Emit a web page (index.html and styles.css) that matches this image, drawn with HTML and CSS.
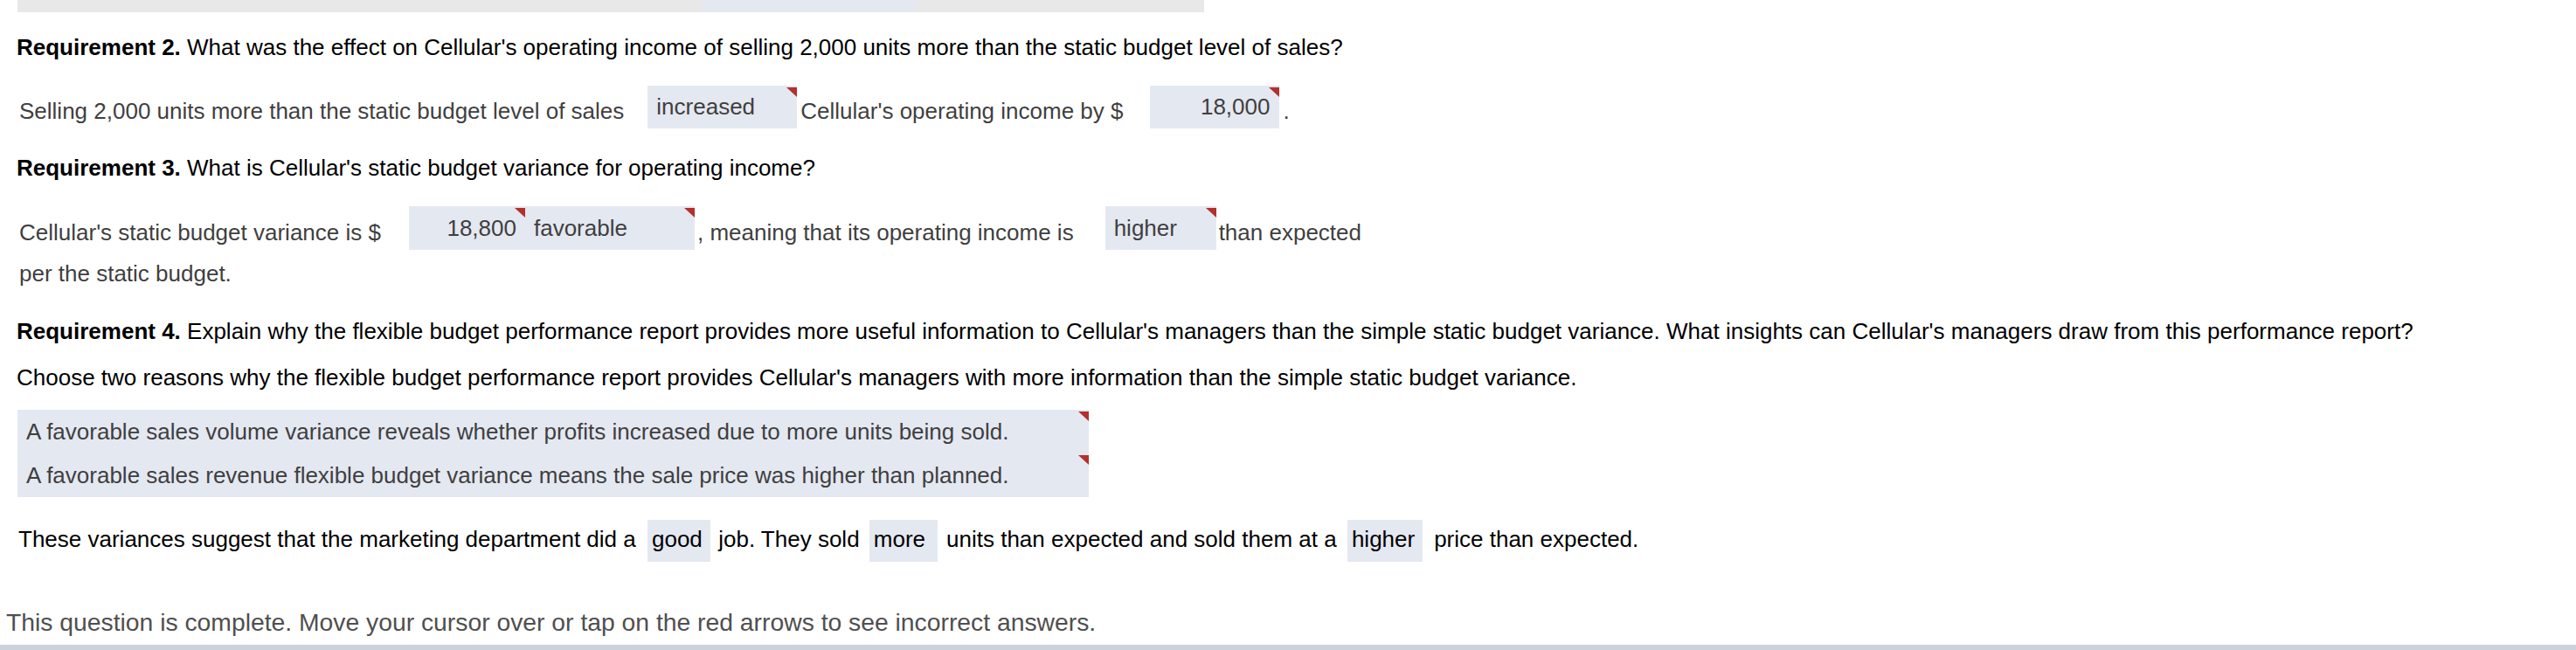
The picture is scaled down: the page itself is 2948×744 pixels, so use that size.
FILE: index.html
```html
<!DOCTYPE html>
<html>
<head>
<meta charset="utf-8">
<link rel="stylesheet" href="styles.css">
</head>
<body>
<div class="page">
  <div class="topbar"><div class="topbar-fill"></div></div>

  <p class="req req-2"><b>Requirement 2.</b> What was the effect on Cellular's operating income of selling 2,000 units more than the static budget level of sales?</p>

  <p class="answer answer-1">Selling 2,000 units more than the static budget level of sales<span class="field f-increased">increased<i class="flag"></i></span>Cellular's operating income by $<span class="field num f-18000">18,000<i class="flag"></i></span>.</p>

  <p class="req req-3"><b>Requirement 3.</b> What is Cellular's static budget variance for operating income?</p>

  <p class="answer answer-2">Cellular's static budget variance is $<span class="field num tall f-18800">18,800<i class="flag"></i></span><span class="field tall f-favorable">favorable<i class="flag"></i></span>, meaning that its operating income is<span class="field tall f-higher">higher<i class="flag"></i></span>than expected<br>per the static budget.</p>

  <p class="req req-4"><b>Requirement 4.</b> Explain why the flexible budget performance report provides more useful information to Cellular's managers than the simple static budget variance. What insights can Cellular's managers draw from this performance report?</p>

  <p class="choose">Choose two reasons why the flexible budget performance report provides Cellular's managers with more information than the simple static budget variance.</p>

  <div class="choices">
    <div class="choice">A favorable sales volume variance reveals whether profits increased due to more units being sold.<i class="flag"></i></div>
    <div class="choice">A favorable sales revenue flexible budget variance means the sale price was higher than planned.<i class="flag"></i></div>
  </div>

  <p class="summary">These variances suggest that the marketing department did a <span class="pick pick-good">good</span> job. They sold <span class="pick pick-more">more</span> units than expected and sold them at a <span class="pick pick-higher">higher</span> price than expected.</p>

  <p class="complete">This question is complete. Move your cursor over or tap on the red arrows to see incorrect answers.</p>

  <div class="footer-band"></div>
</div>
</body>
</html>
```

FILE: styles.css
```css
html, body {
  margin: 0;
  padding: 0;
  background: #ffffff;
}

.page {
  font-family: "Liberation Sans", Arial, sans-serif;
  font-size: 26px;
  color: #000;
  width: 2948px;
  height: 744px;
  overflow: hidden;
}

p {
  margin: 0;
}

.topbar {
  display: flex;
  margin-left: 20px;
  width: 1358px;
  height: 14px;
  background: #e8e8e8;
}

.topbar-fill {
  margin-left: 784px;
  width: 246px;
  height: 14px;
  background: #e4e8f1;
}

.req {
  line-height: 30px;
  padding-left: 19px;
  white-space: nowrap;
}

.req b {
  font-weight: bold;
}

.req-2 { margin-top: 25px; }
.req-3 { margin-top: 26px; }
.req-4 { margin-top: 27px; }

.answer {
  line-height: 47px;
  padding-left: 22px;
  color: #3f3f3f;
  white-space: nowrap;
}

.answer-1 { margin-top: 29px; }
.answer-2 { margin-top: 29px; }

.field {
  position: relative;
  display: inline-block;
  box-sizing: border-box;
  background: #e4e8f1;
  color: #3f3f3f;
  line-height: 30px;
  padding: 9px 10px 10px 10px;
  vertical-align: 5px;
}

.field.tall {
  padding-top: 10px;
  padding-bottom: 10px;
}

.field.num {
  text-align: right;
}

.flag {
  position: absolute;
  top: 2px;
  right: 0;
  width: 0;
  height: 0;
  border-top: 11px solid #b3302c;
  border-left: 12px solid transparent;
}

.f-increased {
  width: 171px;
  margin-left: 27px;
  margin-right: 4px;
}

.f-18000 {
  width: 148px;
  margin-left: 31px;
  margin-right: 4px;
  padding-right: 11px;
}

.f-18800 {
  width: 133px;
  margin-left: 32px;
}

.f-favorable {
  width: 194px;
  margin-right: 3px;
}

.f-higher {
  width: 127px;
  margin-left: 36px;
  margin-right: 3px;
}

.choose {
  margin-top: 23px;
  line-height: 30px;
  padding-left: 19px;
  white-space: nowrap;
}

.choices {
  margin-top: 22px;
  margin-left: 20px;
  width: 1226px;
  background: #e4e8f1;
  color: #3f3f3f;
}

.choice {
  position: relative;
  height: 50px;
  line-height: 50px;
  padding-left: 10px;
  white-space: nowrap;
}

.summary {
  margin-top: 26px;
  line-height: 30px;
  padding-left: 21px;
  white-space: nowrap;
}

.pick {
  display: inline-block;
  box-sizing: border-box;
  background: #e4e8f1;
  line-height: 30px;
  padding: 7px 0 11px 5px;
  margin: 0 4px;
}

.pick-good { width: 72px; margin-left: 6px; margin-right: 2px; }
.pick-more { width: 78px; margin-right: 3px; }
.pick-higher { width: 86px; margin-left: 5px; margin-right: 6px; }

.complete {
  margin-top: 53px;
  font-size: 28.3px;
  line-height: 32px;
  padding-left: 7px;
  color: #4f4f4f;
  white-space: nowrap;
}

.footer-band {
  margin-top: 10px;
  height: 6px;
  background: #cdd1db;
}
```
